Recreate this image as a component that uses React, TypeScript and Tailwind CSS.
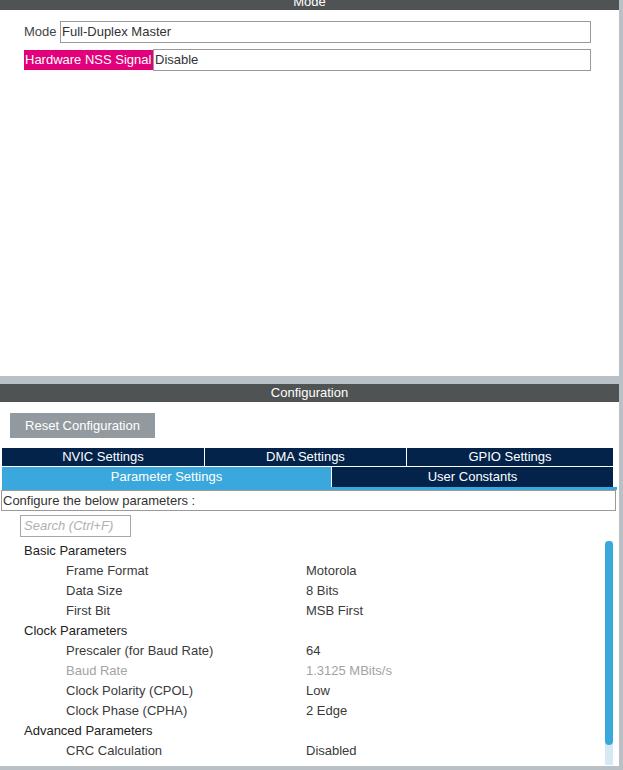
const font = { fontFamily: '"Liberation Sans", Arial, sans-serif' };

type Param = { label: string; value?: string; group?: boolean; muted?: boolean };

const params: Param[] = [
  { label: "Basic Parameters", group: true },
  { label: "Frame Format", value: "Motorola" },
  { label: "Data Size", value: "8 Bits" },
  { label: "First Bit", value: "MSB First" },
  { label: "Clock Parameters", group: true },
  { label: "Prescaler (for Baud Rate)", value: "64" },
  { label: "Baud Rate", value: "1.3125 MBits/s", muted: true },
  { label: "Clock Polarity (CPOL)", value: "Low" },
  { label: "Clock Phase (CPHA)", value: "2 Edge" },
  { label: "Advanced Parameters", group: true },
  { label: "CRC Calculation", value: "Disabled" },
];

function ParamRow({ p }: { p: Param }) {
  if (p.group) {
    return (
      <div className="flex h-[20px] items-center pl-[24px] text-[#222]">
        {p.label}
      </div>
    );
  }
  const color = p.muted ? "text-[#a3a3a3]" : "text-[#3a3a3a]";
  return (
    <div className={`flex h-[20px] items-center ${color}`}>
      <span className="w-[306px] pl-[66px]">{p.label}</span>
      <span>{p.value}</span>
    </div>
  );
}

export default function App() {
  return (
    <div
      className="flex h-[770px] w-[623px] flex-col overflow-hidden bg-[#b9c1c6] text-[13px]"
      style={font}
    >
      {/* Mode panel */}
      <section className="flex h-[376px] w-[619px] flex-col bg-white">
        <div className="h-[10px] overflow-hidden bg-[#505354]">
          <div className="-mt-[7px] h-[18px] text-center leading-[18px] text-white">
            Mode
          </div>
        </div>
        <div className="flex flex-col gap-[6px] pt-[11px]">
          <div className="flex items-center pl-[24px] text-[#444]">
            <span className="w-[36px]">Mode</span>
            <div className="flex h-[22px] w-[531px] items-center border border-[#9a9a9a] pl-[1px] text-[#333]">
              Full-Duplex Master
            </div>
          </div>
          <div className="flex items-center pl-[24px]">
            <span className="flex h-[20px] w-[129px] items-center bg-[#e2007a] pl-[1px] text-white">
              Hardware NSS Signal
            </span>
            <div className="flex h-[22px] w-[438px] items-center border border-[#9a9a9a] pl-[1px] text-[#333]">
              Disable
            </div>
          </div>
        </div>
      </section>

      {/* Configuration panel */}
      <section className="mt-[8px] flex h-[382px] w-[619px] flex-col bg-white">
        <div className="h-[18px] bg-[#505354] text-center leading-[18px] text-white">
          Configuration
        </div>
        <div className="pl-[10px] pt-[11px]">
          <button className="h-[25px] w-[145px] bg-[#939a9f] text-white">
            Reset Configuration
          </button>
        </div>

        <div className="mt-[10px] w-[613px] pl-[2px] text-white">
          <div className="flex h-[19px] border-b border-white bg-[#03234b]">
            <div className="flex w-[203px] items-center justify-center border-r border-white">
              NVIC Settings
            </div>
            <div className="flex w-[202px] items-center justify-center border-r border-white">
              DMA Settings
            </div>
            <div className="flex flex-1 items-center justify-center">
              GPIO Settings
            </div>
          </div>
          <div className="flex h-[20px]">
            <div className="flex w-[330px] items-center justify-center border-r border-white bg-[#3aa8dc]">
              Parameter Settings
            </div>
            <div className="flex flex-1 items-center justify-center bg-[#03234b]">
              User Constants
            </div>
          </div>
        </div>
        <div className="ml-[2px] h-[3px] w-[615px] bg-[#3aa8dc]" />

        <div className="relative flex-1">
          <div className="ml-[1px] flex h-[21px] w-[615px] items-center border border-[#9a9a9a] pl-[1px] text-[#333]">
            Configure the below parameters :
          </div>
          <div className="ml-[20px] mt-[4px] flex h-[22px] w-[111px] items-center border border-[#a8a8a8] pl-[3px] italic text-[#b0b0b0]">
            Search (Ctrl+F)
          </div>
          <div className="mt-[4px]">
            {params.map((p) => (
              <ParamRow key={p.label} p={p} />
            ))}
          </div>

          {/* scrollbar */}
          <div className="absolute left-[605px] top-[51px] flex h-[224px] w-[8px] flex-col bg-[#d6e8f4]">
            <div className="h-[204px] rounded-[4px] bg-[#3aa8dc]" />
          </div>
        </div>
      </section>
    </div>
  );
}
